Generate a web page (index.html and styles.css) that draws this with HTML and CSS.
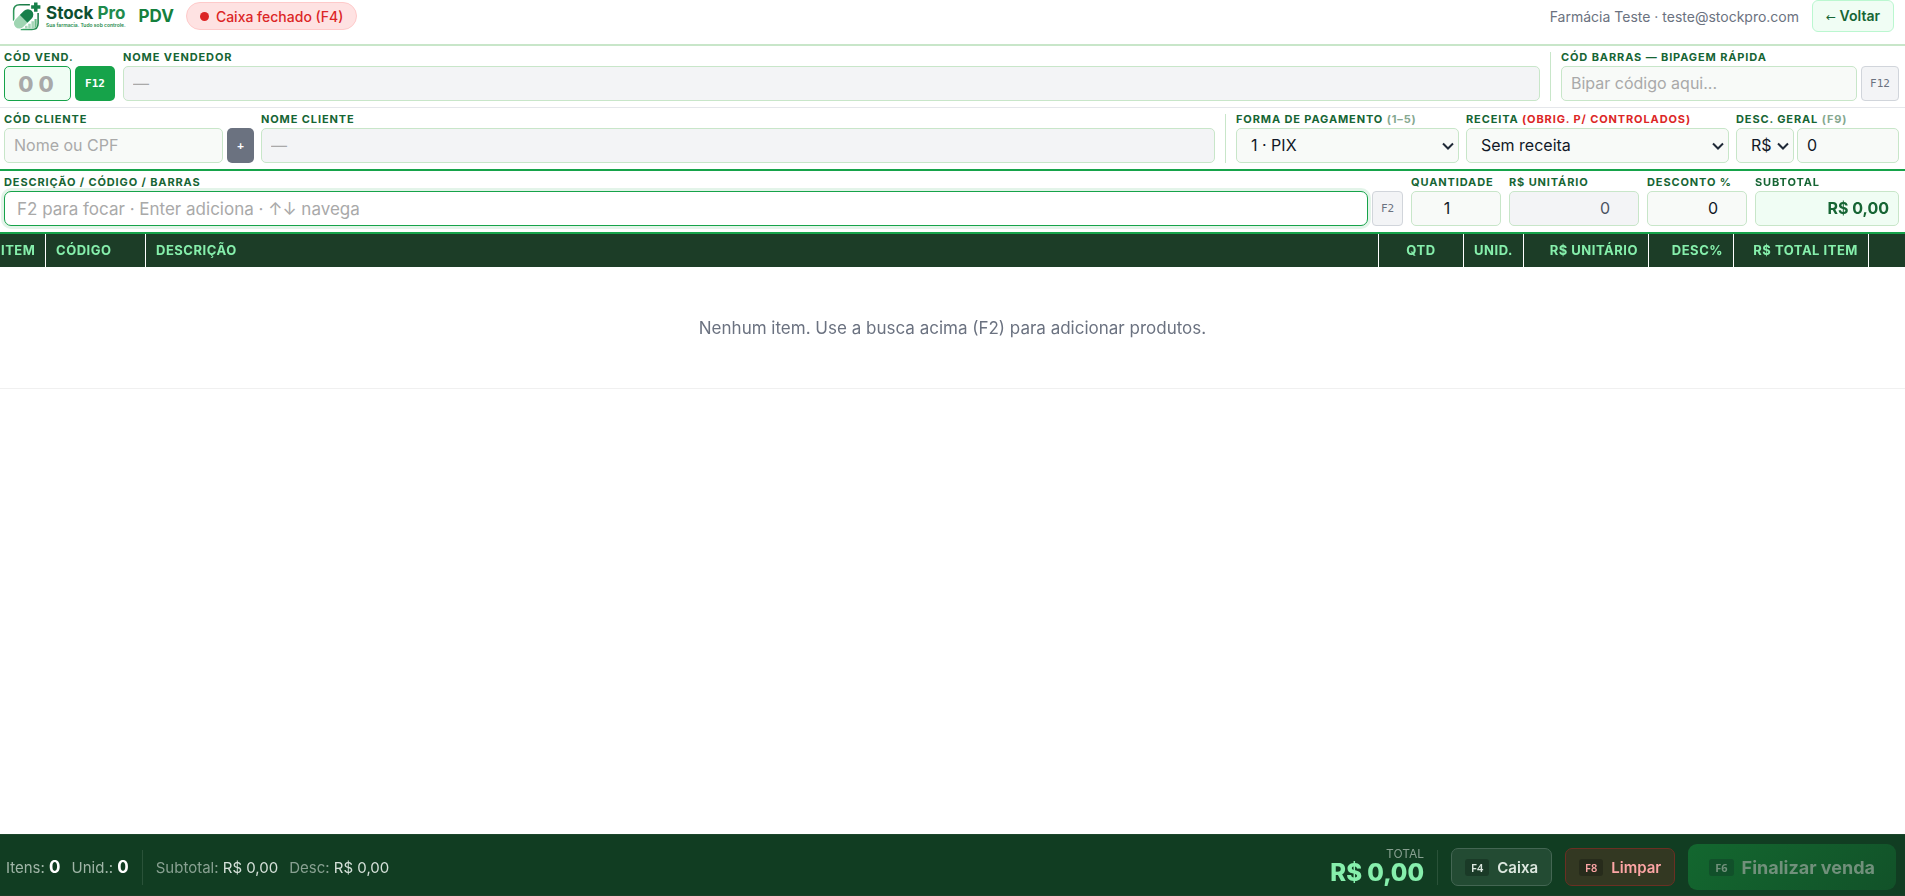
FILE: index.html
```html
<!DOCTYPE html>
<html lang="pt-BR">
<head>
<meta charset="utf-8">
<title>Stock Pro PDV</title>
<link rel="stylesheet" href="styles.css">
</head>
<body>
<div class="app">
  <header class="topbar">
    <div class="brand">
      <svg class="brand-mark" viewBox="0 0 30 30" aria-hidden="true">
        <defs><linearGradient id="lg" x1="0" y1="1" x2="1" y2="0"><stop offset="0" stop-color="#3fae6a"/><stop offset="1" stop-color="#0f6b3c"/></linearGradient></defs>
        <path d="M18.500 3.400H8Q1.700 3.400 1.700 9.500V20M9 29H20.500Q27 29 27 22.500V12" fill="none" stroke="url(#lg)" stroke-width="1.600"/>
        <path d="M22.800 1h3.600v3h3v3.600h-3v3h-3.600v-3h-3V4h3z" fill="#17804a"/>
        <g transform="rotate(-45 12 18)">
          <rect x="-.800" y="11.600" width="25.600" height="12.800" rx="6.400" fill="#fff"/>
          <path d="M12 12.400H5.700a5.600 5.600 0 0 0 0 11.200H12z" fill="#9fd5b2"/>
          <path d="M12 12.400h6.300a5.600 5.600 0 0 1 0 11.200H12z" fill="#17804a"/>
        </g>
        <g fill="#a5d6b7"><path d="M13.500 25h2.600v3h-2.600zM16.800 23h2.600v5h-2.600zM20.100 20.500h2.600V28h-2.600z"/><path d="M23.300 18h2.200v8L23.300 28z" fill="#6dbb88"/></g>
      </svg>
      <div class="brand-words">
        <div class="brand-name">Stock <span>Pro</span></div>
        <div class="brand-tag">Sua farmacia. Tudo sob controle.</div>
      </div>
    </div>
    <h1 class="title">PDV</h1>
    <button class="status" type="button"><span class="dot"></span>Caixa fechado (F4)</button>
    <span class="user">Farmácia Teste · teste@stockpro.com</span>
    <a class="back" href="#"><span class="arrow">←</span> Voltar</a>
  </header>

  <main class="main">
    <section class="row row-seller">
      <div class="field">
        <label for="vend">Cód Vend.</label>
        <div class="group">
          <input id="vend" class="control code" placeholder="00">
          <button class="key key-green" type="button">F12</button>
        </div>
      </div>
      <div class="field grow">
        <label for="vendname">Nome Vendedor</label>
        <input id="vendname" class="control muted" placeholder="—" readonly>
      </div>
      <div class="divider"></div>
      <div class="field barcode">
        <label for="bar">Cód Barras — Bipagem Rápida</label>
        <div class="group">
          <input id="bar" class="control" placeholder="Bipar código aqui...">
          <kbd class="key key-light key-wide">F12</kbd>
        </div>
      </div>
    </section>

    <section class="row row-client">
      <div class="field client">
        <label for="cli">Cód Cliente</label>
        <div class="group">
          <input id="cli" class="control" placeholder="Nome ou CPF">
          <button class="key key-gray" type="button">+</button>
        </div>
      </div>
      <div class="field grow">
        <label for="cliname">Nome Cliente</label>
        <input id="cliname" class="control muted" placeholder="—" readonly>
      </div>
      <div class="divider"></div>
      <div class="field payment">
        <label for="pay">Forma de Pagamento <span class="hint">(1–5)</span></label>
        <select id="pay" class="control"><option>1 · PIX</option></select>
      </div>
      <div class="field recipe">
        <label for="rec">Receita <span class="warn">(obrig. p/ controlados)</span></label>
        <select id="rec" class="control"><option>Sem receita</option></select>
      </div>
      <div class="field discount">
        <label for="desc">Desc. Geral <span class="hint">(F9)</span></label>
        <div class="group tight">
          <select class="control unit" aria-label="Tipo de desconto"><option>R$</option></select>
          <input id="desc" class="control" value="0">
        </div>
      </div>
    </section>

    <section class="row row-product">
      <div class="field grow">
        <label for="search">Descrição / Código / Barras</label>
        <div class="group">
          <input id="search" class="control search" placeholder="F2 para focar · Enter adiciona · ↑↓ navega" autofocus>
          <kbd class="key key-light">F2</kbd>
        </div>
      </div>
      <div class="field qty">
        <label for="qty">Quantidade</label>
        <input id="qty" class="control number center" value="1">
      </div>
      <div class="field price">
        <label for="price">R$ Unitário</label>
        <input id="price" class="control number muted" value="0" readonly>
      </div>
      <div class="field pct">
        <label for="pct">Desconto %</label>
        <input id="pct" class="control number" value="0">
      </div>
      <div class="field sub">
        <label for="sub">Subtotal</label>
        <output id="sub" class="control subtotal">R$ 0,00</output>
      </div>
    </section>

    <table class="items">
      <colgroup><col class="c-item"><col class="c-code"><col><col class="c-qty"><col class="c-unit"><col class="c-price"><col class="c-desc"><col class="c-total"><col class="c-act"></colgroup>
      <thead><tr><th class="first">Item</th><th>Código</th><th>Descrição</th><th class="mid">Qtd</th><th class="mid">Unid.</th><th class="end">R$ Unitário</th><th class="end">Desc%</th><th class="end">R$ Total Item</th><th></th></tr></thead>
      <tbody><tr><td class="empty" colspan="9">Nenhum item. Use a busca acima (F2) para adicionar produtos.</td></tr></tbody>
    </table>
  </main>

  <footer class="footer">
    <div class="counts"><span>Itens: <b>0</b></span><span>Unid.: <b>0</b></span></div>
    <div class="rule"></div>
    <div class="sums"><span>Subtotal: <em>R$ 0,00</em></span><span>Desc: <em>R$ 0,00</em></span></div>
    <div class="total"><span class="total-label">TOTAL</span><strong>R$ 0,00</strong></div>
    <div class="rule"></div>
    <div class="actions">
      <button class="action" type="button"><kbd>F4</kbd>Caixa</button>
      <button class="action danger" type="button"><kbd>F8</kbd>Limpar</button>
      <button class="action finish" type="button" disabled><kbd>F6</kbd>Finalizar venda</button>
    </div>
  </footer>
</div>
</body>
</html>
```
FILE: styles.css
```css
* { box-sizing: border-box; }
body { margin: 0; background: #fff; color: #111827; font-family: Inter, "Noto Sans", sans-serif; font-size: 16px; }
button, input, select { font: inherit; }
.app { display: flex; flex-direction: column; min-height: 100vh; }
.main { flex: 1; }

.topbar { display: flex; align-items: center; padding: 0 11px 12px 12px; border-bottom: 2px solid #c8e6c9; }
.brand { display: flex; align-items: flex-start; gap: 5px; }
.brand-mark { width: 29px; height: 30px; }
.brand-words { padding-top: 2px; }
.brand-name { color: #0d4f30; font-size: 17px; font-weight: 700; line-height: 20px; white-space: nowrap; }
.brand-name span { color: #1f8b4d; }
.brand-tag { color: #1f8b4d; font-size: 5px; font-weight: 600; line-height: 5px; white-space: nowrap; }
.title { margin: 0 12px 0 13px; color: #15803d; font-size: 17px; font-weight: 700; line-height: 20px; }
.status { display: flex; align-items: center; gap: 7px; height: 28px; padding: 0 13px; border: 1px solid #fecaca; border-radius: 14px; background: #fee2e2; color: #dc2626; font-size: 14px; font-weight: 500; }
.dot { width: 9px; height: 9px; border-radius: 50%; background: #dc2626; }
.user { margin-left: auto; color: #6b7280; font-size: 14px; }
.back { margin-left: 13px; padding: 0 13px; border: 1px solid #bbf7d0; border-radius: 6px; background: #f0fdf4; color: #166534; font-size: 14px; font-weight: 600; line-height: 30px; text-decoration: none; }
.arrow { font-family: "DejaVu Sans", sans-serif; font-size: 12px; font-weight: 400; line-height: 12px; }

.row { display: flex; align-items: flex-end; gap: 8px; padding: 6px 6px 6px 4px; }
.row-seller { border-bottom: 1px solid #e5e7eb; }
.row-client { gap: 7px; border-bottom: 2px solid #16a34a; }
.row-product { border-bottom: 2px solid #16a34a; }
.field { display: flex; flex-direction: column; gap: 3px; min-width: 0; }
.grow { flex: 1; }
.field label { color: #166534; font-size: 11px; font-weight: 700; line-height: 11px; letter-spacing: 0.08em; text-transform: uppercase; white-space: nowrap; }
.field label .hint { color: #86a890; }
.field label .warn { color: #dc2626; }
.group { display: flex; gap: 4px; }
.tight { gap: 3px; }
.divider { align-self: stretch; width: 1px; margin: 0 2px; background: #c8e6c9; }
.row-client .divider { margin: 0 3px; }
.control { width: 100%; min-width: 0; height: 35px; padding: 0 9px 1px; border: 1px solid #c8e6c9; border-radius: 5px; outline: none; background: #f8faf8; color: #111827; }
.control::placeholder { color: #a9a9a9; }
.muted { background: #f3f4f6; color: #4b5563; }
.code { width: 67px; padding: 0 4px 0 6px; border-color: #16a34a; background: #f0fdf4; font-size: 22px; font-weight: 800; letter-spacing: 5px; text-align: center; }
.search { padding: 0 12px; border-color: #16a34a; border-radius: 7px; background: #fff; box-shadow: 0 0 0 3px #e3f4e9; font-size: 17px; }
select.control { padding: 0 20px 1px 14px; appearance: none; background: #f8faf8 url("data:image/svg+xml,%3Csvg xmlns='http://www.w3.org/2000/svg' width='12' height='8'%3E%3Cpath d='M1 1.500l5 5 5-5' fill='none' stroke='%231f2937' stroke-width='2'/%3E%3C/svg%3E") no-repeat right 4px center; }
select.unit { flex: none; width: 58px; }
.number { padding-right: 28px; text-align: right; }
.center { padding: 0 27px 1px 9px; text-align: center; }
.subtotal { display: block; background: #f0fdf4; color: #166534; font-weight: 700; line-height: 33px; text-align: right; }
.key { display: flex; flex: none; align-items: center; justify-content: center; height: 35px; padding: 0; border: 0; border-radius: 5px; font-family: "DejaVu Sans Mono", monospace; font-size: 11px; }
.key-green { width: 40px; background: #16a34a; color: #fff; font-weight: 700; }
.key-gray { width: 27px; background: #6b7280; color: #fff; font-weight: 700; }
.key-light { width: 31px; border: 1px solid #d1d5db; border-radius: 4px; background: #f3f4f6; color: #6b7280; }
.key-wide { width: 38px; }
.barcode { width: 338px; }
.client { width: 250px; }
.payment { width: 223px; }
.recipe { width: 263px; }
.discount { width: 163px; }
.qty { width: 90px; }
.price { width: 130px; }
.pct { width: 100px; }
.sub { width: 144px; }

.items { width: 100%; border-collapse: separate; border-spacing: 0; table-layout: fixed; }
.c-item { width: 46px; }
.c-code { width: 100px; }
.c-qty, .c-desc { width: 85px; }
.c-unit { width: 60px; }
.c-price { width: 125px; }
.c-total { width: 135px; }
.c-act { width: 36px; }
.items th { height: 33px; padding: 0 10px 1px; border-right: 1px solid #fff; background: #1c3d27; color: #86efac; font-size: 13px; font-weight: 700; letter-spacing: 0.04em; text-align: left; text-transform: uppercase; white-space: nowrap; }
.items th:last-child { border-right: 0; }
.items th.first { padding-left: 1px; }
.items th.mid { text-align: center; }
.items th.end { text-align: right; }
.empty { height: 122px; padding: 0; border-bottom: 1px solid #f0f0f0; color: #6b7280; font-size: 17px; text-align: center; }

.footer { display: flex; align-items: center; padding: 9px 9px 5px 6px; border-top: 1px solid #1c472c; border-bottom: 1px solid #1c3d27; background: #113d22; color: #88a091; font-size: 15px; }
.counts, .sums { display: flex; align-items: baseline; gap: 11px; white-space: nowrap; }
.counts { color: #a0b5a7; }
.footer b { color: #fff; font-size: 17px; }
.footer em { color: #d5e0d9; font-style: normal; }
.rule { width: 1px; height: 35px; margin: 0 13px; background: #2a5239; }
.total { display: flex; flex-direction: column; align-items: flex-end; margin-left: auto; }
.total-label { font-size: 12px; line-height: 12px; }
.total strong { color: #86efac; font-size: 24px; font-weight: 800; line-height: 26px; }
.actions { display: flex; align-items: center; gap: 13px; }
.action { display: flex; align-items: center; gap: 8px; height: 38px; padding: 0 13px; border: 1px solid #446653; border-radius: 7px; background: #234b33; color: #dce7df; font-size: 15px; font-weight: 600; white-space: nowrap; }
.action kbd { padding: 0 6px; border-radius: 3px; background: #1a3a27; font-family: "Noto Sans", sans-serif; font-size: 11px; line-height: 17px; }
.danger { border-color: #6b2f23; background: #333822; color: #fca5a5; }
.danger kbd { background: #272b1b; }
.finish { height: 46px; padding: 0 21px; border: 0; border-radius: 9px; background: linear-gradient(135deg, #13672f, #125229); color: #71907b; font-size: 18px; font-weight: 700; }
.finish kbd { background: #11502a; }
```
